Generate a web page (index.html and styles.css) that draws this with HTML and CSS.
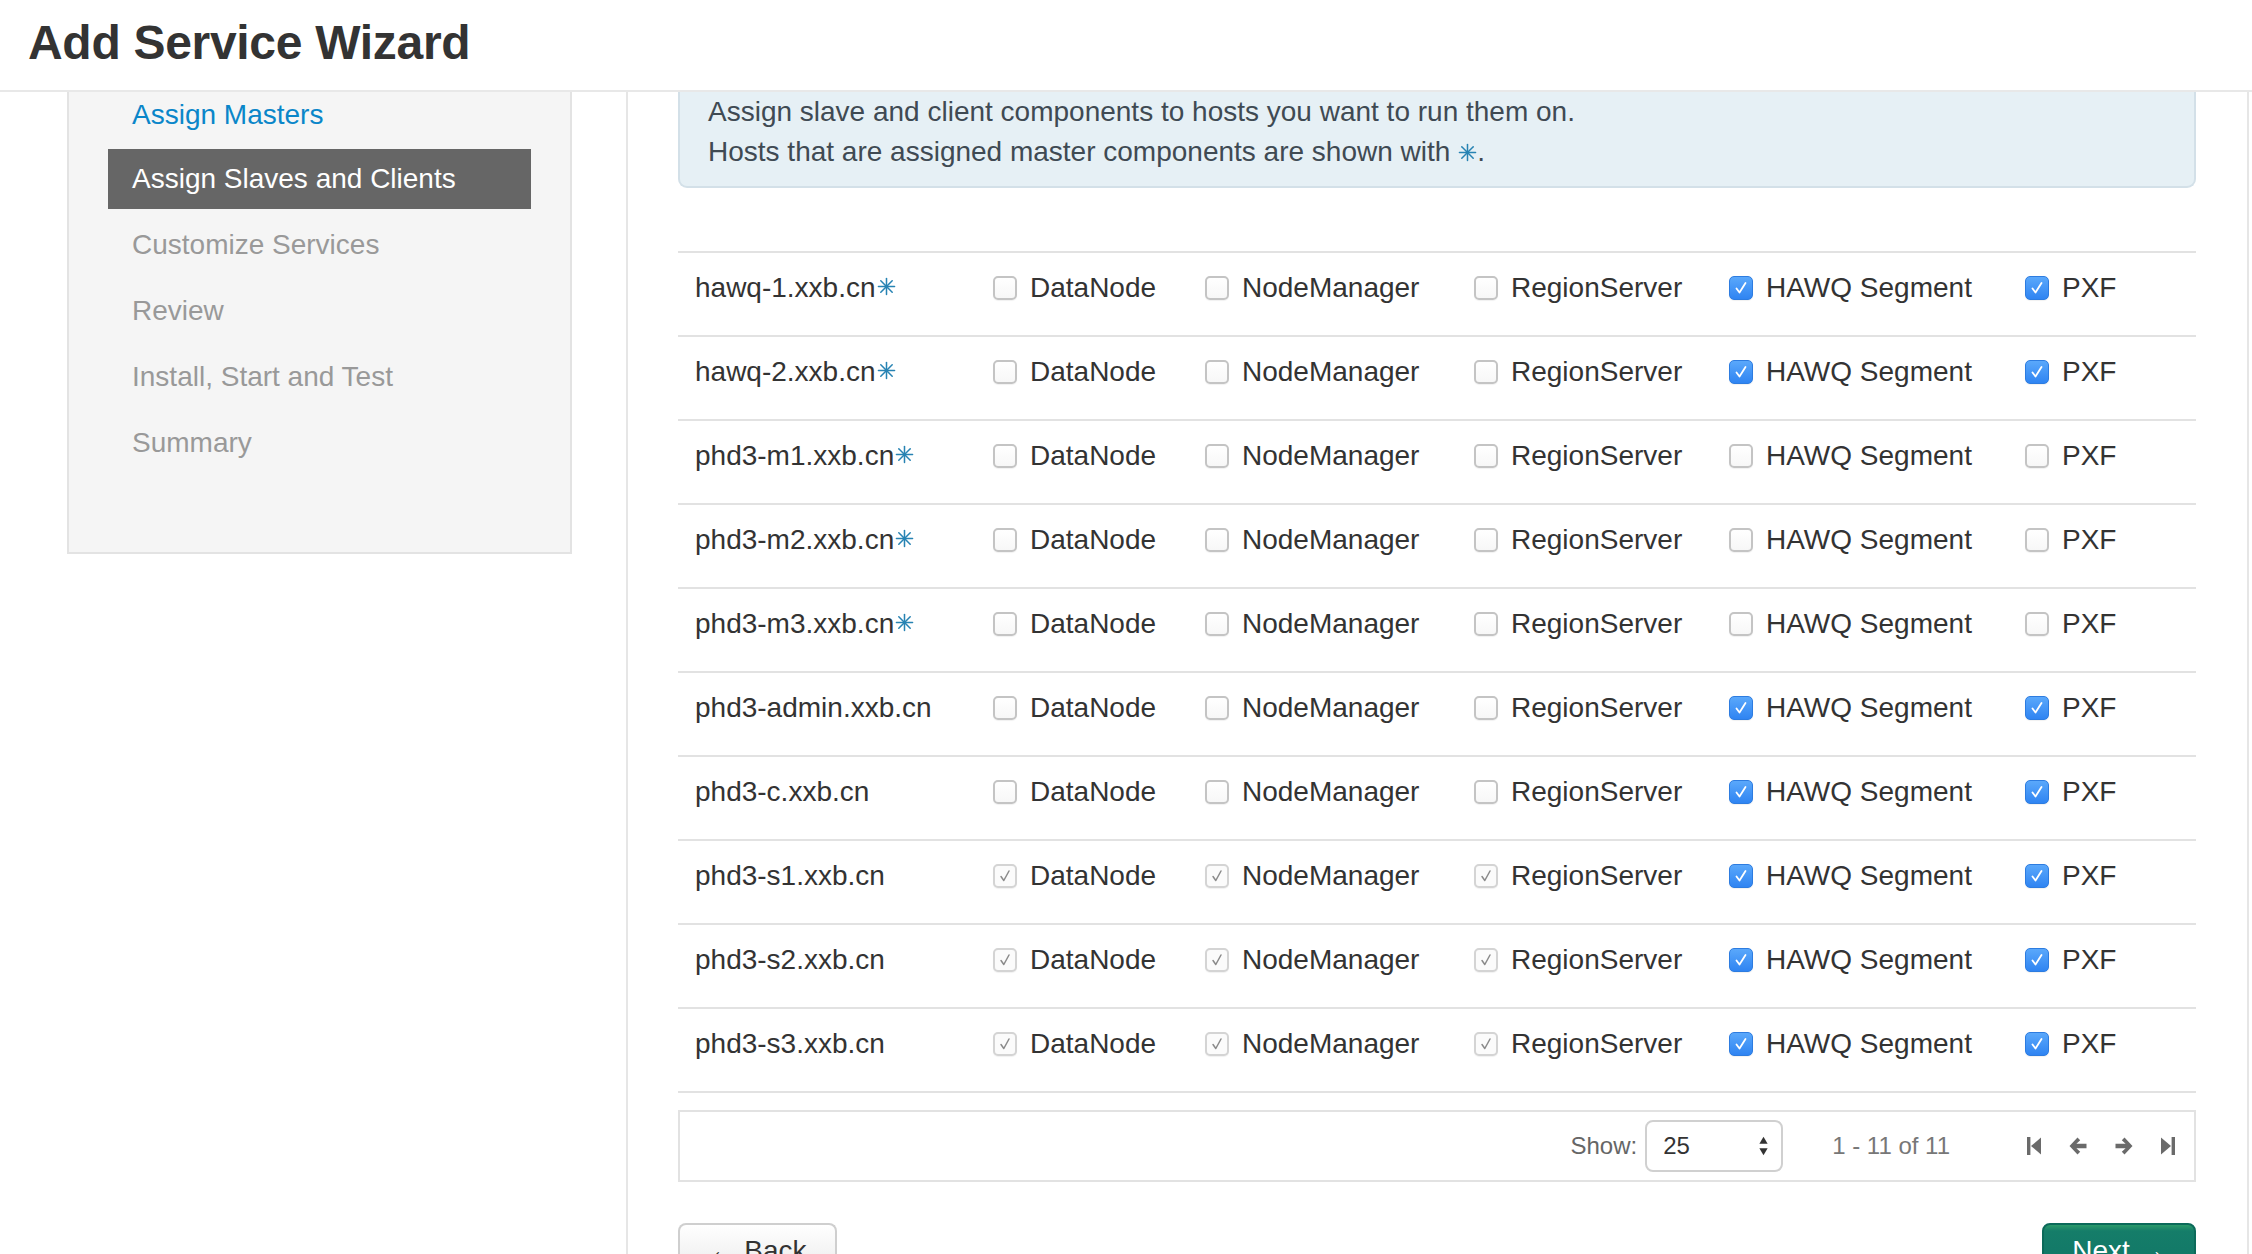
FILE: index.html
```html
<!DOCTYPE html>
<html lang="en">
<head>
<meta charset="utf-8">
<title>Add Service Wizard</title>
<link rel="stylesheet" href="styles.css">
</head>
<body>
<div class="page">
  <header class="topbar"><h1 class="title">Add Service Wizard</h1></header>
  <div class="wizard">
    <aside class="nav-col">
      <div class="well">
        <ul class="steps">
          <li class="step done first">Assign Masters</li>
          <li class="step active">Assign Slaves and Clients</li>
          <li class="step">Customize Services</li>
          <li class="step">Review</li>
          <li class="step">Install, Start and Test</li>
          <li class="step">Summary</li>
        </ul>
      </div>
    </aside>
    <main class="content">
      <div class="alert">
        <div>Assign slave and client components to hosts you want to run them on.</div>
        <div>Hosts that are assigned master components are shown with <svg class="star star-inline" viewBox="0 0 20 20"><g stroke-width="1.6" stroke-linecap="round"><line x1="10" y1="1.5" x2="10" y2="18.5"/><line x1="1.5" y1="10" x2="18.5" y2="10"/><line x1="4" y1="4" x2="16" y2="16"/><line x1="16" y1="4" x2="4" y2="16"/></g></svg>.</div>
      </div>

      <div class="hosts">
        <div class="row">
          <div class="cell host">hawq-1.xxb.cn<svg class="star" viewBox="0 0 20 20"><g stroke-width="1.6" stroke-linecap="round"><line x1="10" y1="1.5" x2="10" y2="18.5"/><line x1="1.5" y1="10" x2="18.5" y2="10"/><line x1="4" y1="4" x2="16" y2="16"/><line x1="16" y1="4" x2="4" y2="16"/></g></svg></div>
          <div class="cell"><span class="cb"></span><span class="lbl">DataNode</span></div>
          <div class="cell"><span class="cb"></span><span class="lbl">NodeManager</span></div>
          <div class="cell"><span class="cb"></span><span class="lbl">RegionServer</span></div>
          <div class="cell"><span class="cb on"><svg viewBox="0 0 22 22"><polyline points="6.5,11.5 9.5,15.5 15.5,6"/></svg></span><span class="lbl">HAWQ Segment</span></div>
          <div class="cell"><span class="cb on"><svg viewBox="0 0 22 22"><polyline points="6.5,11.5 9.5,15.5 15.5,6"/></svg></span><span class="lbl">PXF</span></div>
        </div>
        <div class="row">
          <div class="cell host">hawq-2.xxb.cn<svg class="star" viewBox="0 0 20 20"><g stroke-width="1.6" stroke-linecap="round"><line x1="10" y1="1.5" x2="10" y2="18.5"/><line x1="1.5" y1="10" x2="18.5" y2="10"/><line x1="4" y1="4" x2="16" y2="16"/><line x1="16" y1="4" x2="4" y2="16"/></g></svg></div>
          <div class="cell"><span class="cb"></span><span class="lbl">DataNode</span></div>
          <div class="cell"><span class="cb"></span><span class="lbl">NodeManager</span></div>
          <div class="cell"><span class="cb"></span><span class="lbl">RegionServer</span></div>
          <div class="cell"><span class="cb on"><svg viewBox="0 0 22 22"><polyline points="6.5,11.5 9.5,15.5 15.5,6"/></svg></span><span class="lbl">HAWQ Segment</span></div>
          <div class="cell"><span class="cb on"><svg viewBox="0 0 22 22"><polyline points="6.5,11.5 9.5,15.5 15.5,6"/></svg></span><span class="lbl">PXF</span></div>
        </div>
        <div class="row">
          <div class="cell host">phd3-m1.xxb.cn<svg class="star" viewBox="0 0 20 20"><g stroke-width="1.6" stroke-linecap="round"><line x1="10" y1="1.5" x2="10" y2="18.5"/><line x1="1.5" y1="10" x2="18.5" y2="10"/><line x1="4" y1="4" x2="16" y2="16"/><line x1="16" y1="4" x2="4" y2="16"/></g></svg></div>
          <div class="cell"><span class="cb"></span><span class="lbl">DataNode</span></div>
          <div class="cell"><span class="cb"></span><span class="lbl">NodeManager</span></div>
          <div class="cell"><span class="cb"></span><span class="lbl">RegionServer</span></div>
          <div class="cell"><span class="cb"></span><span class="lbl">HAWQ Segment</span></div>
          <div class="cell"><span class="cb"></span><span class="lbl">PXF</span></div>
        </div>
        <div class="row">
          <div class="cell host">phd3-m2.xxb.cn<svg class="star" viewBox="0 0 20 20"><g stroke-width="1.6" stroke-linecap="round"><line x1="10" y1="1.5" x2="10" y2="18.5"/><line x1="1.5" y1="10" x2="18.5" y2="10"/><line x1="4" y1="4" x2="16" y2="16"/><line x1="16" y1="4" x2="4" y2="16"/></g></svg></div>
          <div class="cell"><span class="cb"></span><span class="lbl">DataNode</span></div>
          <div class="cell"><span class="cb"></span><span class="lbl">NodeManager</span></div>
          <div class="cell"><span class="cb"></span><span class="lbl">RegionServer</span></div>
          <div class="cell"><span class="cb"></span><span class="lbl">HAWQ Segment</span></div>
          <div class="cell"><span class="cb"></span><span class="lbl">PXF</span></div>
        </div>
        <div class="row">
          <div class="cell host">phd3-m3.xxb.cn<svg class="star" viewBox="0 0 20 20"><g stroke-width="1.6" stroke-linecap="round"><line x1="10" y1="1.5" x2="10" y2="18.5"/><line x1="1.5" y1="10" x2="18.5" y2="10"/><line x1="4" y1="4" x2="16" y2="16"/><line x1="16" y1="4" x2="4" y2="16"/></g></svg></div>
          <div class="cell"><span class="cb"></span><span class="lbl">DataNode</span></div>
          <div class="cell"><span class="cb"></span><span class="lbl">NodeManager</span></div>
          <div class="cell"><span class="cb"></span><span class="lbl">RegionServer</span></div>
          <div class="cell"><span class="cb"></span><span class="lbl">HAWQ Segment</span></div>
          <div class="cell"><span class="cb"></span><span class="lbl">PXF</span></div>
        </div>
        <div class="row">
          <div class="cell host">phd3-admin.xxb.cn</div>
          <div class="cell"><span class="cb"></span><span class="lbl">DataNode</span></div>
          <div class="cell"><span class="cb"></span><span class="lbl">NodeManager</span></div>
          <div class="cell"><span class="cb"></span><span class="lbl">RegionServer</span></div>
          <div class="cell"><span class="cb on"><svg viewBox="0 0 22 22"><polyline points="6.5,11.5 9.5,15.5 15.5,6"/></svg></span><span class="lbl">HAWQ Segment</span></div>
          <div class="cell"><span class="cb on"><svg viewBox="0 0 22 22"><polyline points="6.5,11.5 9.5,15.5 15.5,6"/></svg></span><span class="lbl">PXF</span></div>
        </div>
        <div class="row">
          <div class="cell host">phd3-c.xxb.cn</div>
          <div class="cell"><span class="cb"></span><span class="lbl">DataNode</span></div>
          <div class="cell"><span class="cb"></span><span class="lbl">NodeManager</span></div>
          <div class="cell"><span class="cb"></span><span class="lbl">RegionServer</span></div>
          <div class="cell"><span class="cb on"><svg viewBox="0 0 22 22"><polyline points="6.5,11.5 9.5,15.5 15.5,6"/></svg></span><span class="lbl">HAWQ Segment</span></div>
          <div class="cell"><span class="cb on"><svg viewBox="0 0 22 22"><polyline points="6.5,11.5 9.5,15.5 15.5,6"/></svg></span><span class="lbl">PXF</span></div>
        </div>
        <div class="row">
          <div class="cell host">phd3-s1.xxb.cn</div>
          <div class="cell"><span class="cb dis"><svg viewBox="0 0 22 22"><polyline points="7,11.5 9.8,15.5 15,6"/></svg></span><span class="lbl">DataNode</span></div>
          <div class="cell"><span class="cb dis"><svg viewBox="0 0 22 22"><polyline points="7,11.5 9.8,15.5 15,6"/></svg></span><span class="lbl">NodeManager</span></div>
          <div class="cell"><span class="cb dis"><svg viewBox="0 0 22 22"><polyline points="7,11.5 9.8,15.5 15,6"/></svg></span><span class="lbl">RegionServer</span></div>
          <div class="cell"><span class="cb on"><svg viewBox="0 0 22 22"><polyline points="6.5,11.5 9.5,15.5 15.5,6"/></svg></span><span class="lbl">HAWQ Segment</span></div>
          <div class="cell"><span class="cb on"><svg viewBox="0 0 22 22"><polyline points="6.5,11.5 9.5,15.5 15.5,6"/></svg></span><span class="lbl">PXF</span></div>
        </div>
        <div class="row">
          <div class="cell host">phd3-s2.xxb.cn</div>
          <div class="cell"><span class="cb dis"><svg viewBox="0 0 22 22"><polyline points="7,11.5 9.8,15.5 15,6"/></svg></span><span class="lbl">DataNode</span></div>
          <div class="cell"><span class="cb dis"><svg viewBox="0 0 22 22"><polyline points="7,11.5 9.8,15.5 15,6"/></svg></span><span class="lbl">NodeManager</span></div>
          <div class="cell"><span class="cb dis"><svg viewBox="0 0 22 22"><polyline points="7,11.5 9.8,15.5 15,6"/></svg></span><span class="lbl">RegionServer</span></div>
          <div class="cell"><span class="cb on"><svg viewBox="0 0 22 22"><polyline points="6.5,11.5 9.5,15.5 15.5,6"/></svg></span><span class="lbl">HAWQ Segment</span></div>
          <div class="cell"><span class="cb on"><svg viewBox="0 0 22 22"><polyline points="6.5,11.5 9.5,15.5 15.5,6"/></svg></span><span class="lbl">PXF</span></div>
        </div>
        <div class="row">
          <div class="cell host">phd3-s3.xxb.cn</div>
          <div class="cell"><span class="cb dis"><svg viewBox="0 0 22 22"><polyline points="7,11.5 9.8,15.5 15,6"/></svg></span><span class="lbl">DataNode</span></div>
          <div class="cell"><span class="cb dis"><svg viewBox="0 0 22 22"><polyline points="7,11.5 9.8,15.5 15,6"/></svg></span><span class="lbl">NodeManager</span></div>
          <div class="cell"><span class="cb dis"><svg viewBox="0 0 22 22"><polyline points="7,11.5 9.8,15.5 15,6"/></svg></span><span class="lbl">RegionServer</span></div>
          <div class="cell"><span class="cb on"><svg viewBox="0 0 22 22"><polyline points="6.5,11.5 9.5,15.5 15.5,6"/></svg></span><span class="lbl">HAWQ Segment</span></div>
          <div class="cell"><span class="cb on"><svg viewBox="0 0 22 22"><polyline points="6.5,11.5 9.5,15.5 15.5,6"/></svg></span><span class="lbl">PXF</span></div>
        </div>
      </div>

      <div class="pager">
        <span class="show">Show:</span>
        <div class="select"><span>25</span>
          <svg class="updown" viewBox="0 0 12 24"><path d="M6 2 L10.5 9.5 L1.5 9.5 Z"/><path d="M6 22 L10.5 14.5 L1.5 14.5 Z"/></svg>
        </div>
        <span class="range">1 - 11 of 11</span>
        <div class="pnav">
          <svg class="pico edge" viewBox="0 0 16 24"><rect x="1" y="3" width="3.4" height="18"/><path d="M15 3.5 L5 12 L15 20.5 Z"/></svg>
          <svg class="pico arrow" viewBox="0 0 20 24"><path d="M9.5 3.5 L1.5 12 L9.5 20.5 L12.2 17.8 L8.4 14.2 L18.5 14.2 L18.5 9.8 L8.4 9.8 L12.2 6.2 Z"/></svg>
          <svg class="pico arrow" viewBox="0 0 20 24"><path d="M10.5 3.5 L18.5 12 L10.5 20.5 L7.8 17.8 L11.6 14.2 L1.5 14.2 L1.5 9.8 L11.6 9.8 L7.8 6.2 Z"/></svg>
          <svg class="pico edge" viewBox="0 0 16 24"><path d="M1 3.5 L11 12 L1 20.5 Z"/><rect x="11.6" y="3" width="3.4" height="18"/></svg>
        </div>
      </div>

      <div class="actions">
        <button class="btn back" type="button">&larr; Back</button>
        <button class="btn next" type="button">Next &rarr;</button>
      </div>
    </main>
  </div>
</div>
</body>
</html>
```

FILE: styles.css
```css
* { box-sizing: border-box; }
html, body { margin: 0; padding: 0; height: 100%; overflow: hidden; background: #fff; }
body { font-family: "Liberation Sans", Arial, Helvetica, sans-serif; color: #333; font-size: 28px; }

.page { width: 2252px; height: 1254px; display: flex; flex-direction: column; }

.topbar {
  height: 92px;
  border-bottom: 2px solid #e8e8e8;
  padding: 0 0 4px 28px;
  display: flex;
  align-items: center;
  flex: none;
}
.title { margin: 0; font-size: 48px; font-weight: bold; color: #333; line-height: 1; letter-spacing: -0.3px; }

.wizard { display: flex; flex: 1; min-height: 0; overflow: hidden; }

.nav-col { width: 626px; flex: none; padding-left: 67px; }
.well {
  width: 505px;
  background: #f5f5f5;
  border: 2px solid #e3e3e3;
  border-top: none;
  padding: 0 39px 79px;
}
.steps { list-style: none; margin: 0; padding: 0; display: flex; flex-direction: column; gap: 6px; }
.step {
  height: 60px;
  line-height: 60px;
  padding-left: 24px;
  color: #999;
  white-space: nowrap;
}
.step.first { height: 46px; line-height: 46px; margin-bottom: 5px; }
.step.done { color: #0a86c9; }
.step.active { background: #666; color: #fff; }

.content {
  width: 1623px;
  flex: none;
  border-left: 2px solid #e6e6e6;
  border-right: 2px solid #e6e6e6;
  padding: 0 51px 0 50px;
}

.alert {
  background: #e6f0f5;
  border: 2px solid #d3e0e8;
  border-top: none;
  border-radius: 0 0 9px 9px;
  color: #3f4a53;
  line-height: 40px;
  padding: 0 28px 14px;
}

.star { width: 19px; height: 19px; stroke: #2783b3; fill: none; margin-left: 1px; flex: none; position: relative; top: -2px; }
.star-inline { vertical-align: -1px; top: 0; margin-left: 0; }

.hosts { margin-top: 63px; border-bottom: 2px solid #e2e2e2; }
.row {
  display: grid;
  grid-template-columns: 300px 212px 269px 255px 296px 1fr;
  border-top: 2px solid #e2e2e2;
  height: 84px;
  padding-top: 15px;
}
.cell { display: flex; align-items: center; height: 40px; padding-left: 15px; white-space: nowrap; color: #333; }
.cell.host { padding-left: 17px; }
.lbl { margin-left: 13px; }

.cb {
  width: 24px; height: 24px;
  border-radius: 5px;
  border: 2px solid #c4c4c4;
  background: linear-gradient(#ffffff, #f7f7f7);
  box-shadow: 0 1px 1px rgba(0,0,0,0.06);
  flex: none;
  display: flex; align-items: center; justify-content: center;
}
.cb svg { width: 22px; height: 22px; fill: none; flex: none; }
.cb.on {
  background: linear-gradient(#5aa8fb, #2f84f2);
  border: 1px solid #2d7ce0;
}
.cb.on polyline { stroke: #fff; stroke-width: 1.8; stroke-linecap: round; stroke-linejoin: round; }
.cb.dis { background: #fbfbfb; border-color: #d4d4d4; }
.cb.dis polyline { stroke: #8a8a8a; stroke-width: 1.5; stroke-linecap: round; stroke-linejoin: round; }

.pager {
  margin-top: 17px;
  height: 72px;
  border: 2px solid #e2e2e2;
  display: flex;
  justify-content: flex-end;
  align-items: center;
  padding-right: 18px;
  font-size: 24px;
}
.show { color: #666; margin-right: 8px; }
.select {
  width: 138px; height: 52px;
  border: 2px solid #d0d0d0;
  border-radius: 8px;
  background: #fff;
  display: flex; align-items: center; justify-content: space-between;
  padding: 0 12px 0 16px;
  color: #333;
}
.updown { width: 11px; height: 24px; fill: #333; }
.range { color: #777; margin-left: 49px; }
.pnav { display: flex; align-items: center; gap: 26px; margin-left: 76px; }
.pico { height: 24px; fill: #6a6a6a; }
.pico.edge { width: 16px; }
.pico.arrow { width: 20px; }

.actions { margin-top: 41px; display: flex; justify-content: space-between; }
.btn {
  font-family: inherit;
  font-size: 28px;
  line-height: 40px;
  padding: 6px 28px 14px;
  border-radius: 8px;
  cursor: pointer;
}
.btn.back {
  width: 159px;
  background: linear-gradient(#ffffff, #e6e6e6);
  border: 2px solid #cfcfcf;
  border-bottom-color: #b5b5b5;
  color: #333;
}
.btn.next {
  width: 154px;
  background: linear-gradient(#2b9a6a 0, #157d69 6px, #0f7466 100%);
  border: 2px solid #0c6a5a;
  color: #fff;
}
```
